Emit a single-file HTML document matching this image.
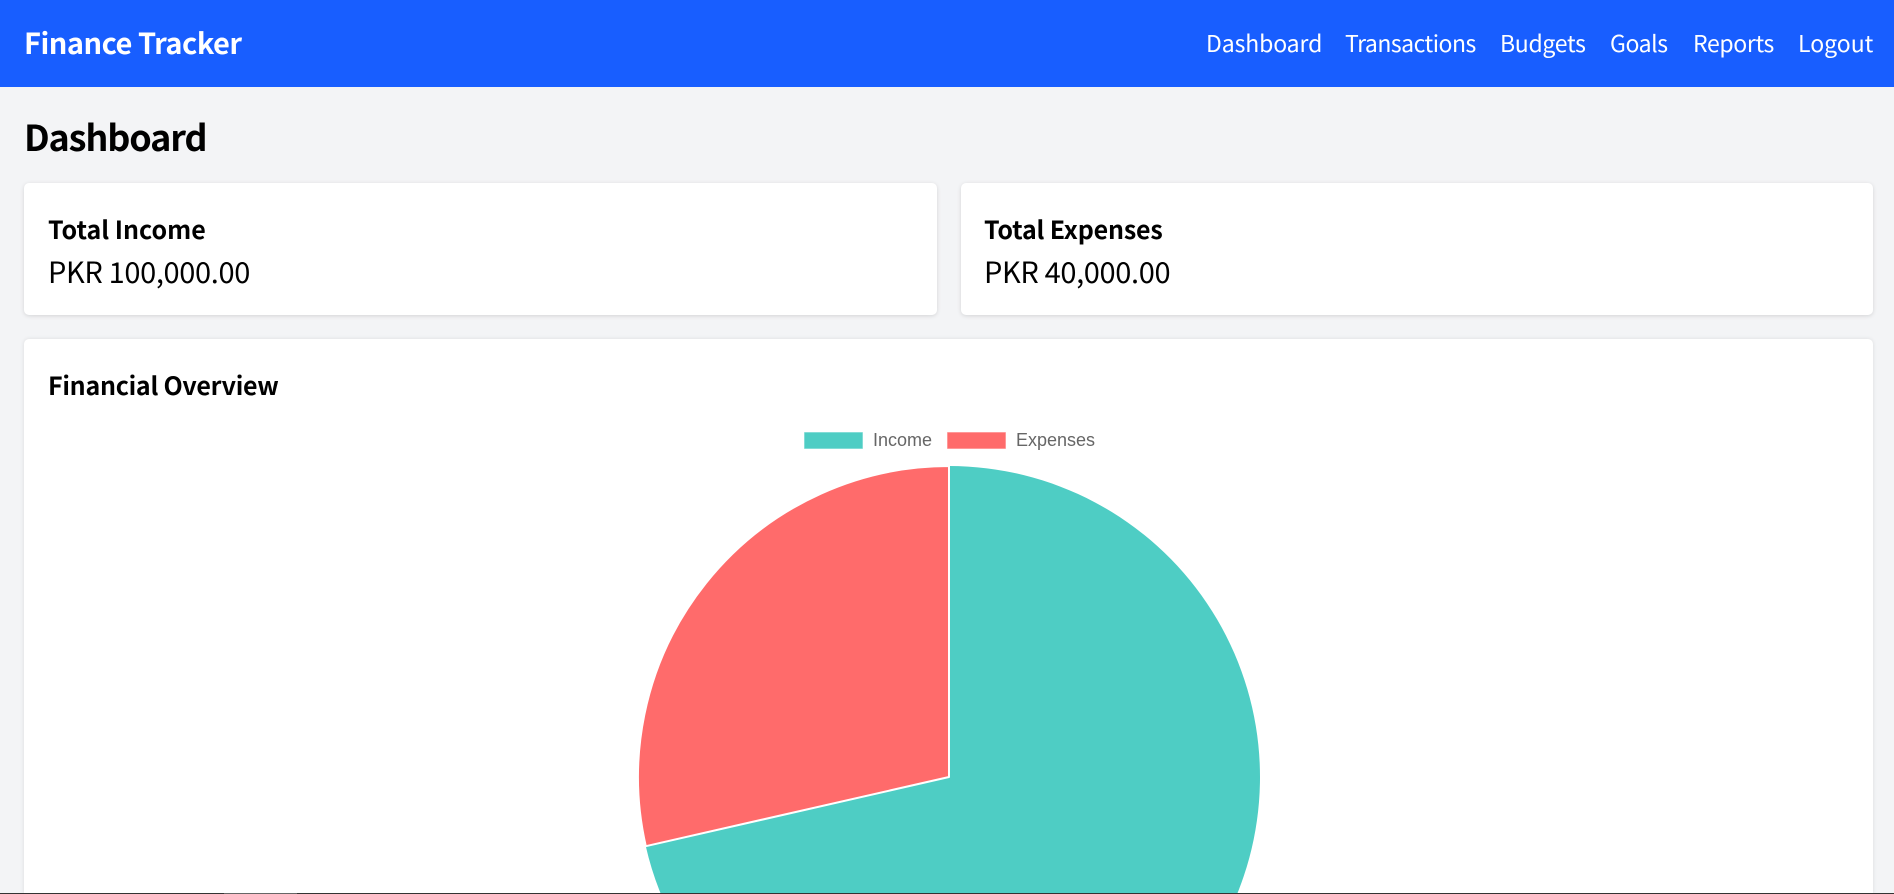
<!DOCTYPE html>
<html><head><meta charset="utf-8"><title>Finance Tracker</title>
<style>
*{box-sizing:border-box;margin:0;padding:0}
html,body{width:1894px;height:894px;overflow:hidden;background:#f3f4f6;font-family:"Noto Sans CJK JP","Liberation Sans",sans-serif;color:#000}
#app{position:relative;width:1894px;height:894px;overflow:hidden}
header{position:absolute;left:0;top:0;width:1894px;height:87px;background:#185eff}
.t{position:absolute;white-space:nowrap;line-height:1}
.logo{left:24px;top:28px;font-size:29px;font-weight:700;color:#fff;letter-spacing:-.5px}
nav a{position:absolute;top:31px;font-size:23px;line-height:1;color:#fff;white-space:nowrap;text-decoration:none}
h1{left:24px;top:118px;font-size:36px;font-weight:700;letter-spacing:-1.15px}
.card{position:absolute;background:#fff;border-radius:5px;box-shadow:0 1px 4px rgba(0,0,0,.13)}
h2{font-size:25px;font-weight:700}
.v{font-size:29px;letter-spacing:-.35px}
svg{position:absolute;left:0;top:0;overflow:hidden}
#line{position:absolute;left:0;top:893px;width:1894px;height:1px;background:#333}
#line2{position:absolute;left:224px;top:893px;width:73px;height:1px;background:#666}
</style></head><body>
<div id="app">
<header>
<div class="t logo">Finance Tracker</div>
<nav>
<a style="left:1206px;letter-spacing:-.1px">Dashboard</a>
<a style="left:1345px;letter-spacing:-.5px">Transactions</a>
<a style="left:1500px;letter-spacing:-.3px">Budgets</a>
<a style="left:1610px;letter-spacing:-.4px">Goals</a>
<a style="left:1693px;letter-spacing:-.35px">Reports</a>
<a style="left:1798px">Logout</a>
</nav>
</header>
<h1 class="t">Dashboard</h1>
<div class="card" style="left:24px;top:183px;width:913px;height:132px"></div>
<div class="card" style="left:961px;top:183px;width:912px;height:132px"></div>
<div class="card" style="left:24px;top:339px;width:1849px;height:555px;border-radius:5px 5px 0 0;box-shadow:0 0 4px rgba(0,0,0,.1)"></div>
<h2 class="t" style="left:48px;top:217px">Total Income</h2>
<div class="t v" style="left:48px;top:257px">PKR 100,000.00</div>
<h2 class="t" style="left:984px;top:217px;letter-spacing:-.17px">Total Expenses</h2>
<div class="t v" style="left:984px;top:257px">PKR 40,000.00</div>
<h2 class="t" style="left:48px;top:373px;letter-spacing:-.27px">Financial Overview</h2>
<svg width="1894" height="894" viewBox="0 0 1894 894">
<path d="M949 466 A311 311 0 0 1 1237.15 894 L660.85 894 A311 311 0 0 1 645.8 846.2 L949 777 Z" fill="#4ecdc4"/>
<path d="M949 777 L645.8 846.2 A311 311 0 0 1 949 466 Z" fill="#ff6b6b" stroke="#fff" stroke-width="2" stroke-linejoin="round"/>
<rect x="804" y="432" width="59" height="17" fill="#4ecdc4" stroke="#fff" stroke-opacity=".6"/>
<rect x="947" y="432" width="59" height="17" fill="#ff6b6b" stroke="#fff" stroke-opacity=".6"/>
<text x="873" y="446" font-family="Liberation Sans" font-size="18" fill="#666">Income</text>
<text x="1016" y="446" font-family="Liberation Sans" font-size="18" fill="#666">Expenses</text>
</svg>
<div id="line"></div><div id="line2"></div>
</div>
</body></html>
